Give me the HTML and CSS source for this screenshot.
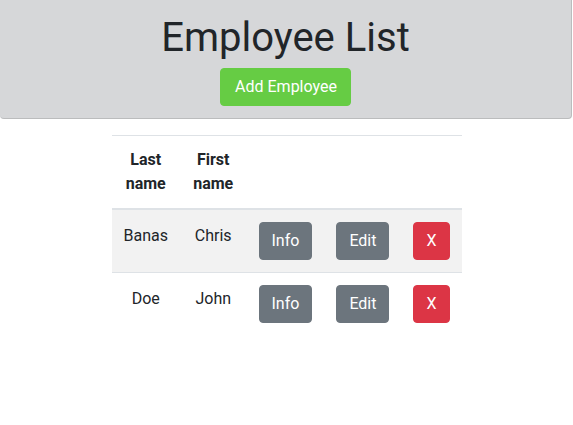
FILE: index.html
```html
<!DOCTYPE html>
<html>
<head>
<meta charset="utf-8">
<link rel="stylesheet" href="styles.css">
</head>
<body>
<header class="banner">
  <h1 class="title">Employee List</h1>
  <button class="btn btn-add">Add Employee</button>
</header>
<main class="content">
  <table class="table">
    <thead>
      <tr>
        <th class="col-last">Last name</th>
        <th class="col-first">First name</th>
        <th></th>
        <th></th>
        <th></th>
      </tr>
    </thead>
    <tbody>
      <tr class="striped">
        <td class="txt">Banas</td>
        <td class="txt">Chris</td>
        <td><button class="btn btn-gray">Info</button></td>
        <td><button class="btn btn-gray">Edit</button></td>
        <td><button class="btn btn-red">X</button></td>
      </tr>
      <tr>
        <td class="txt">Doe</td>
        <td class="txt">John</td>
        <td><button class="btn btn-gray">Info</button></td>
        <td><button class="btn btn-gray">Edit</button></td>
        <td><button class="btn btn-red">X</button></td>
      </tr>
    </tbody>
  </table>
</main>
</body>
</html>
```

FILE: styles.css
```css
* { box-sizing: border-box; }
html, body {
  margin: 0;
  padding: 0;
  background: #fff;
  font-family: Roboto, "Liberation Sans", Arial, sans-serif;
  font-size: 16px;
  line-height: 24px;
  color: #212529;
}
.banner {
  width: 572px;
  background: #d6d7d9;
  border: 1px solid rgba(0,0,0,0.125);
  border-top: none;
  border-left: none;
  border-radius: 0 0 4px 4px;
  text-align: center;
  padding: 14px 0 12px;
  height: 119px;
}
.title {
  margin: 0 0 6px;
  font-size: 40px;
  line-height: 48px;
  font-weight: 400;
}
.btn {
  display: inline-block;
  font-family: inherit;
  font-size: 16px;
  line-height: 24px;
  padding: 6px 12px;
  border: 1px solid transparent;
  border-radius: 4px;
  color: #fff;
  cursor: pointer;
}
.btn-add {
  background: #66cc44;
  border-color: #66cc44;
  padding: 6px 13px 6px 14px;
}
.btn-gray { background: #6c757d; border-color: #6c757d; }
.btn-red { background: #dc3545; border-color: #dc3545; }
.content {
  padding-top: 16px;
  display: flex;
  justify-content: center;
}
.table {
  width: 350px;
  border-collapse: collapse;
}
.table th, .table td {
  padding: 12px;
  text-align: center;
  border-top: 1px solid #dee2e6;
  vertical-align: top;
}
.table td.txt {
  padding-top: 14px;
  padding-bottom: 10px;
}
.table th {
  vertical-align: bottom;
  border-bottom: 2px solid #dee2e6;
  font-weight: 700;
}
.col-last { width: 68px; }
.col-first { width: 67px; }
.striped { background: #f2f2f2; }
```
